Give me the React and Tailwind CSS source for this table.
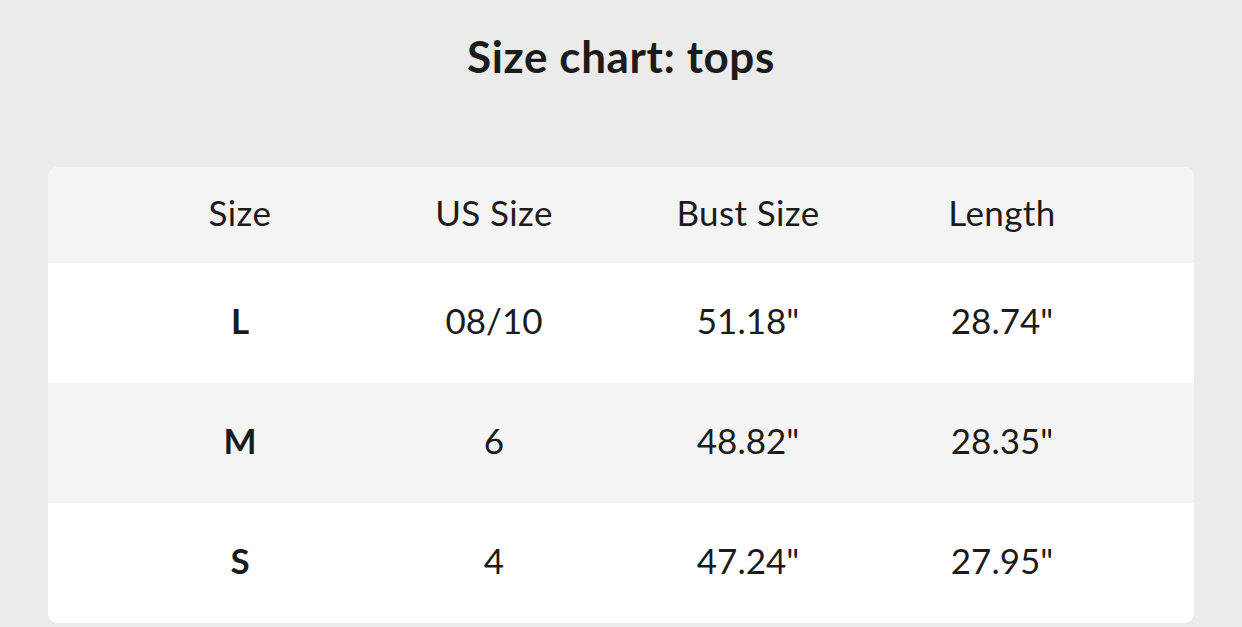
import React from 'react';

const rows = [
  { size: 'L', us: '08/10', bust: '51.18"', length: '28.74"' },
  { size: 'M', us: '6', bust: '48.82"', length: '28.35"' },
  { size: 'S', us: '4', bust: '47.24"', length: '27.95"' },
];

export default function App() {
  return (
    <div className="min-h-[627px] w-[1242px] bg-[#ebebeb] text-[#1b1b1b] font-['Lato',sans-serif] overflow-hidden">
      <h1 className="pt-[28px] pb-[2px] text-center text-[44px] leading-[56px] font-bold tracking-[0.6px]">
        Size chart: tops
      </h1>

      <div className="mx-[48px] mt-[81px] rounded-[10px] overflow-hidden bg-white">
        {/* header */}
        <div className="grid grid-cols-4 h-[96px] items-center px-[65px] pb-[5px] bg-[#f4f4f4] text-[35px] tracking-[0.4px]">
          <div className="text-center">Size</div>
          <div className="text-center">US Size</div>
          <div className="text-center">Bust Size</div>
          <div className="text-center">Length</div>
        </div>

        {rows.map((r, i) => (
          <div
            key={r.size}
            className={`grid grid-cols-4 h-[120px] items-center px-[65px] pb-[5px] text-[35px] ${i % 2 === 1 ? 'bg-[#f4f4f4]' : 'bg-white'}`}
          >
            <div className="text-center font-bold">{r.size}</div>
            <div className="text-center">{r.us}</div>
            <div className="text-center">{r.bust}</div>
            <div className="text-center">{r.length}</div>
          </div>
        ))}
      </div>
    </div>
  );
}
